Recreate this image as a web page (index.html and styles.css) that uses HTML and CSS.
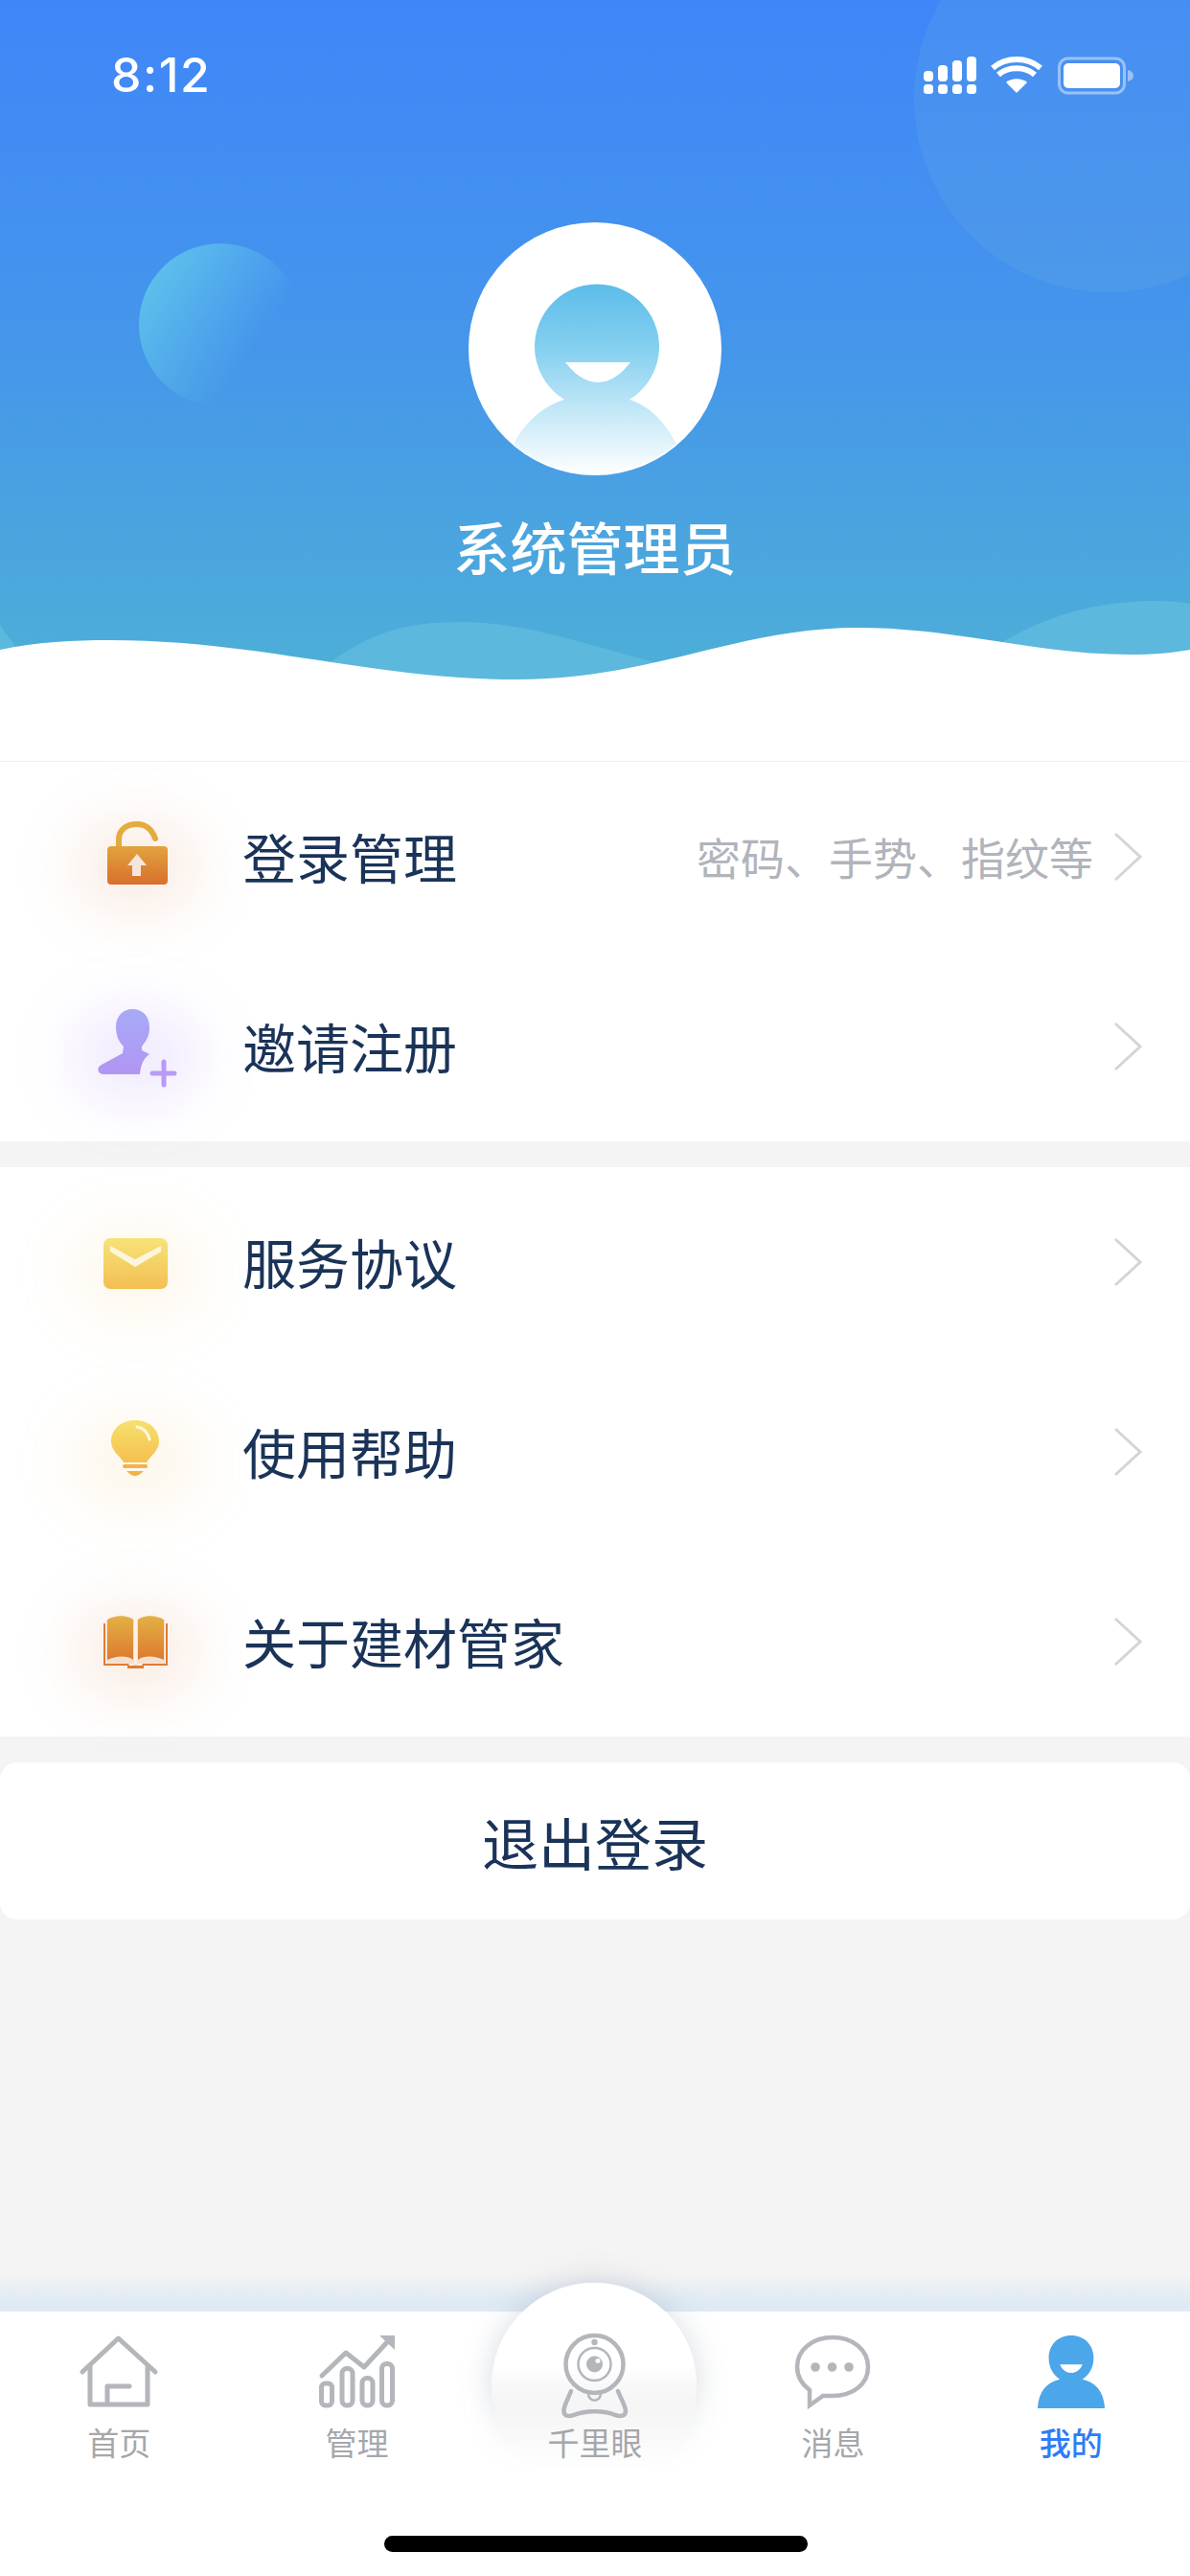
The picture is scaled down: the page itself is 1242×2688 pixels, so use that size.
FILE: index.html
```html
<!DOCTYPE html>
<html lang="zh">
<head>
<meta charset="utf-8">
<title>我的</title>
<link rel="stylesheet" href="styles.css">
</head>
<body>
<div class="page">
  <header class="hero">
    <svg class="hero-art" viewBox="0 0 1242 794" aria-hidden="true">
      <defs>
        <linearGradient id="sky" x1="0" y1="0" x2="0" y2="1"><stop offset="0" stop-color="#3f86f9"/><stop offset=".5" stop-color="#4596eb"/><stop offset="1" stop-color="#4eb0d6"/></linearGradient>
        <linearGradient id="ball" x1=".05" y1=".15" x2=".72" y2=".62"><stop offset="0" stop-color="#62c8eb" stop-opacity=".9"/><stop offset="1" stop-color="#62c8eb" stop-opacity="0"/></linearGradient>
      </defs>
      <rect width="1242" height="720" fill="url(#sky)"/>
      <circle cx="1156" cy="103" r="202" fill="#78bcd8" fill-opacity=".16"/>
      <circle cx="230" cy="339" r="85" fill="url(#ball)"/>
      <path d="M0 652C8 665 16 672 26 690L0 700Z" fill="#5cb8dd"/>
      <path d="M320 710C380 660 420 649 483 649C560 650 630 680 720 700L600 740Z" fill="#5cb8dd"/>
      <path d="M1030 680C1090 640 1150 627 1204 627C1220 627 1232 628 1242 630V700H1050Z" fill="#5cb8dd"/>
      <path d="M0 678C38 670 76 668 115 668C270 668 390 709 539 709C680 709 770 655 895 655C1000 655 1080 683 1180 683C1205 683 1225 681 1242 678V794H0Z" fill="#fff"/>
    </svg>
    <div class="avatar">
      <svg class="avatar-art" viewBox="0 0 264 264" aria-hidden="true">
        <defs><linearGradient id="face" x1="0" y1="63" x2="0" y2="264" gradientUnits="userSpaceOnUse"><stop offset="0" stop-color="#5cbce9"/><stop offset=".35" stop-color="#86d0f0"/><stop offset=".68" stop-color="#c6e9f7"/><stop offset="1" stop-color="#fff"/></linearGradient></defs>
        <path d="M100 185A65 65 0 1 1 168 185C190 192 206 210 217 231A132 132 0 0 1 47 231C58 210 77 192 100 185Z" fill="url(#face)"/>
        <path d="M101 146H169C160 158 148 167 135 167C122 167 110 158 101 146Z" fill="#fff"/>
      </svg>
    </div>
    <h1 class="name">系统管理员</h1>
  </header>

  <section class="group">
    <a class="row">
      <span class="ico"><span class="glow glow-orange"></span>
        <svg class="i-lock" viewBox="0 0 63 66" aria-hidden="true"><defs><linearGradient id="lock" x1="0" y1="0" x2="0" y2="1"><stop offset="0" stop-color="#e2a33e"/><stop offset="1" stop-color="#d86f2c"/></linearGradient></defs>
          <path d="M12 28V19C12 8 21 3 31 3C41 3 47 10 50 18" fill="none" stroke="#e4ac3f" stroke-width="6" stroke-linecap="round"/>
          <rect x="0" y="26" width="63" height="40" rx="4" fill="url(#lock)"/>
          <path d="M31 34L41 46H35V57H26V46H21Z" fill="#f6e6da"/></svg></span>
      <span class="label">登录管理</span><span class="hint">密码、手势、指纹等</span>
      <svg class="chev" viewBox="0 0 30 52" aria-hidden="true"><path d="M2 2L28 26L2 50"/></svg>
    </a>
    <a class="row">
      <span class="ico"><span class="glow glow-purple"></span>
        <svg class="i-user" viewBox="0 0 82 81" aria-hidden="true"><defs><linearGradient id="usr" x1="0" y1="0" x2="0" y2="1"><stop offset="0" stop-color="#a7aaf7"/><stop offset="1" stop-color="#b195f3"/></linearGradient></defs>
          <path d="M36 0C48 0 54 8 54 20C54 28 50 34 46 39L46 43L54 47C48 51 45 58 44 68H6C0 68 -2 61 4 58L26 46L27 39C22 34 19 28 19 18C19 8 26 0 36 0Z" fill="url(#usr)"/>
          <path d="M57 67H80M69 55V79" stroke="#b79bf5" stroke-width="5" stroke-linecap="round" fill="none"/></svg></span>
      <span class="label">邀请注册</span>
      <svg class="chev" viewBox="0 0 30 52" aria-hidden="true"><path d="M2 2L28 26L2 50"/></svg>
    </a>
  </section>

  <section class="group">
    <a class="row">
      <span class="ico"><span class="glow glow-yellow"></span>
        <svg class="i-mail" viewBox="0 0 67 53" aria-hidden="true"><defs><linearGradient id="mail" x1="0" y1="0" x2="0" y2="1"><stop offset="0" stop-color="#f7e377"/><stop offset="1" stop-color="#f3bf53"/></linearGradient></defs>
          <rect width="67" height="53" rx="7" fill="url(#mail)"/>
          <path d="M7 8L33 22L60 8V14L33 30L7 14Z" fill="#fdf6dc"/></svg></span>
      <span class="label">服务协议</span>
      <svg class="chev" viewBox="0 0 30 52" aria-hidden="true"><path d="M2 2L28 26L2 50"/></svg>
    </a>
    <a class="row">
      <span class="ico"><span class="glow glow-bulb"></span>
        <svg class="i-bulb" viewBox="0 0 50 58" aria-hidden="true"><defs><linearGradient id="bulb" x1="0" y1="0" x2="0" y2="1"><stop offset="0" stop-color="#f7e06e"/><stop offset="1" stop-color="#f5c04f"/></linearGradient></defs>
          <path d="M25 0C40 0 50 10 50 22C50 32 41 37 37 44H13C9 37 0 32 0 22C0 10 10 0 25 0Z" fill="url(#bulb)"/>
          <path d="M27 7C33 8 38 11 40 20" fill="none" stroke="#fdf8e2" stroke-width="3" stroke-linecap="round"/>
          <rect x="12" y="46" width="26" height="4" rx="2" fill="#f4b24a"/><path d="M16 53H34C31 56 28 58 25 58C22 58 19 56 16 53Z" fill="#f4b24a"/></svg></span>
      <span class="label">使用帮助</span>
      <svg class="chev" viewBox="0 0 30 52" aria-hidden="true"><path d="M2 2L28 26L2 50"/></svg>
    </a>
    <a class="row">
      <span class="ico"><span class="glow glow-orange"></span>
        <svg class="i-book" viewBox="0 0 67 56" aria-hidden="true"><defs><linearGradient id="book" x1="0" y1="0" x2="0" y2="1"><stop offset="0" stop-color="#e4b045"/><stop offset="1" stop-color="#dc7a2f"/></linearGradient></defs>
          <path d="M0 9H2V51H26L27 53H40L41 51H65V9H67V53H42V56H25V53H0Z" fill="#de7d33"/>
          <path d="M3 51V6C13 0 24 0 32 5V52L30 53H37L35 52V5C43 0 54 0 64 6V51Z" fill="#f5e0cf"/>
          <path d="M4 5C13 0 24 0 31 5V47C24 42 13 43 4 47ZM36 5C43 0 54 0 63 5V47C54 43 43 42 36 47Z" fill="url(#book)"/></svg></span>
      <span class="label">关于建材管家</span>
      <svg class="chev" viewBox="0 0 30 52" aria-hidden="true"><path d="M2 2L28 26L2 50"/></svg>
    </a>
  </section>

  <button class="logout">退出登录</button>
</div>

<div class="status">
  <span class="time">8:12</span>
  <svg class="status-icons" viewBox="0 0 220 40" aria-hidden="true">
    <g fill="#fff">
      <rect x="0" y="15" width="10" height="11" rx="4"/><rect x="15" y="9" width="10" height="17" rx="4"/><rect x="30" y="4" width="10" height="22" rx="4"/><rect x="45" y="0" width="10" height="26" rx="4"/>
      <rect x="0" y="29" width="10" height="10" rx="3.5"/><rect x="15" y="29" width="10" height="10" rx="3.5"/><rect x="30" y="29" width="10" height="10" rx="3.5"/><rect x="45" y="29" width="10" height="10" rx="3.5"/>
      <path d="M97 38L86 27C92 22 102 22 108 27Z"/>
      <path d="M78 19C88 10 106 10 116 19" fill="none" stroke="#fff" stroke-width="6"/>
      <path d="M72 10C86 -2 108 -2 122 10" fill="none" stroke="#fff" stroke-width="6" transform="translate(0 2)"/>
      <rect x="146" y="7" width="59" height="26" rx="5"/>
      <rect x="141.500" y="2" width="68" height="36" rx="9" fill="none" stroke="#fff" stroke-opacity=".45" stroke-width="3"/>
      <path d="M213 14C217 15 219 17 219 20C219 23 217 25 213 26Z" fill-opacity=".45"/>
    </g>
  </svg>
</div>

<nav class="tabbar">
  <div class="bump-mask"><div class="bump"></div></div>
  <div class="tabs">
    <a class="tab"><svg viewBox="0 0 80 76" aria-hidden="true"><path d="M2 38L39.500 3L78 38M10 31V72H70V31M28 72V53H51" fill="none" stroke="#b3b6bb" stroke-width="5" stroke-linecap="round" stroke-linejoin="round"/></svg><span>首页</span></a>
    <a class="tab"><svg viewBox="0 0 80 76" aria-hidden="true"><g fill="none" stroke="#b3b6bb" stroke-width="5" stroke-linecap="round" stroke-linejoin="round"><path d="M3 42L28 18L47 33L72 6"/><rect x="2.500" y="50" width="11" height="23" rx="4"/><rect x="24" y="34.500" width="11" height="38.500" rx="5"/><rect x="45" y="44.500" width="11" height="28.500" rx="5"/><rect x="65.500" y="29.500" width="11" height="43.500" rx="5"/></g><path d="M63 0H79V15Z" fill="#b3b6bb"/></svg><span>管理</span></a>
    <a class="tab"><svg class="i-cam" viewBox="0 0 68 88" aria-hidden="true"><g fill="none" stroke="#b3b6bb"><circle cx="33.500" cy="32" r="30" stroke-width="4.500"/><circle cx="33.500" cy="32" r="17" stroke-width="2.500"/><path d="M9 60C6 68 1 76 1.500 81C1.500 86 6 87 12 85C24 80 44 80 55 85C61 87 66 86 66 81C66 76 61 68 58 60" stroke-linecap="round" stroke-width="4.500"/><path d="M27 63C28 72 39 72 40 63" stroke-width="2.500"/></g><circle cx="33.500" cy="32" r="8.500" fill="#b3b6bb"/><circle cx="33.500" cy="9" r="3.200" fill="#b3b6bb"/><circle cx="37" cy="28.500" r="2.500" fill="#fff"/></svg><span>千里眼</span></a>
    <a class="tab"><svg viewBox="0 0 80 76" aria-hidden="true"><path d="M16 73V57C7 50 3 42 3 33C3 15 19 2 40 2C61 2 77 15 77 33C77 51 61 63 40 63H30Z" fill="none" stroke="#b3b6bb" stroke-width="4.500" stroke-linejoin="miter"/><circle cx="22" cy="33" r="4.800" fill="#b3b6bb"/><circle cx="39.500" cy="33" r="4.800" fill="#b3b6bb"/><circle cx="57" cy="33" r="4.800" fill="#b3b6bb"/></svg><span>消息</span></a>
    <a class="tab tab-on"><svg viewBox="0 0 72 78" aria-hidden="true"><path d="M24 47C15 41 12 32 12 24C12 10 22 0 36 0C50 0 60 10 60 24C60 32 57 41 48 47C62 50 71 60 72 78H0C1 60 10 50 24 47Z" fill="#4ba6ea"/><path d="M24 31H48C46 37 41 40 36 40C31 40 26 37 24 31Z" fill="#fff"/></svg><span>我的</span></a>
  </div>
  <div class="home"></div>
</nav>
</body>
</html>
```
FILE: styles.css
```css
* { box-sizing: border-box; margin: 0; padding: 0; }
html, body { width: 1242px; height: 2688px; overflow: hidden; }
body { position: relative; background: #f4f4f4; font-family: "Noto Sans CJK SC", "Noto Sans", sans-serif; }
.page { display: flex; flex-direction: column; }

.hero { position: relative; height: 795px; background: #fff; border-bottom: 1px solid #f1f1f1; }
.hero-art { position: absolute; left: 0; top: 0; width: 1242px; height: 794px; display: block; }
.avatar { position: absolute; left: 489px; top: 232px; width: 264px; height: 264px; border-radius: 50%; background: #fff; overflow: hidden; }
.avatar-art { display: block; width: 264px; height: 264px; }
.name { position: absolute; left: 0; right: 0; top: 528px; text-align: center; color: #fff; font-size: 59px; font-weight: 500; line-height: 84px; }

.group { background: #fff; display: flex; flex-direction: column; margin-bottom: 27px; }
.row { height: 198px; display: flex; align-items: center; padding: 0 50px 0 253px; position: relative; }
.ico { position: absolute; left: 60px; top: 0; bottom: 0; width: 166px; display: flex; align-items: center; justify-content: center; }
.ico svg { position: relative; overflow: visible; display: block; }
.glow { position: absolute; left: 14px; right: 14px; top: 50%; height: 100px; margin-top: -40px; border-radius: 50%; filter: blur(30px); }
.glow-orange { background: rgba(222, 130, 70, .14); }
.glow-purple { background: rgba(170, 130, 250, .17); }
.glow-yellow { background: rgba(245, 200, 90, .12); }
.glow-bulb { background: rgba(245, 190, 90, .13); }
.i-lock { width: 63px; height: 66px; margin-top: -9px; }
.i-user { width: 82px; height: 81px; margin-top: 3px; }
.i-mail { width: 67px; height: 53px; margin: 3px 3px 0 0; }
.i-bulb { width: 50px; height: 58px; margin: -8px 4px 0 0; }
.i-book { width: 67px; height: 56px; margin: 0 3px 0 0; }
.label { flex: 1; font-size: 56px; color: #1a3358; line-height: 80px; margin-top: -3px; }
.hint { font-size: 46px; color: #b1b4bb; margin-right: 21px; margin-top: -3px; }
.chev { width: 30px; height: 52px; display: block; fill: none; stroke: #d3d5d8; stroke-width: 3; }

.logout { display: block; width: 1242px; height: 164px; border: 0; border-radius: 18px; background: #fff; color: #1a3358; font: 400 59px "Noto Sans CJK SC", "Noto Sans", sans-serif; }

.status { position: absolute; left: 0; right: 0; top: 0; }
.time { position: absolute; left: 116px; top: 48px; color: #fff; font: 500 50px/60px Inter, "Noto Sans", sans-serif; letter-spacing: 1.5px; }
.status-icons { position: absolute; left: 964px; top: 59px; width: 220px; height: 40px; overflow: visible; }

.tabbar { position: absolute; left: 0; right: 0; top: 2412px; height: 276px; background: #fff; border-top: 2px solid #fdfeff; }
.tabbar::before { content: ""; position: absolute; left: 0; right: 0; top: -42px; height: 40px; background: linear-gradient(to bottom, rgba(222, 234, 244, 0), #dfeaf4 75%); }
.bump-mask { position: absolute; left: 433px; top: -82px; width: 374px; height: 252px; padding: 50px 80px 0; -webkit-mask-image: linear-gradient(to bottom, #000 156px, transparent 246px); mask-image: linear-gradient(to bottom, #000 156px, transparent 246px); }
.bump { width: 214px; height: 214px; border-radius: 50%; background: linear-gradient(to bottom, #fff 40%, #f1f1f2 62%); box-shadow: 0 0 32px rgba(120, 135, 155, .3); }
.tabs { position: relative; display: grid; grid-template-columns: repeat(5, 1fr); }
.tab { display: flex; flex-direction: column; align-items: center; height: 170px; padding-top: 23px; font-size: 33px; line-height: 48px; color: #a5a7ab; }
.tab svg { display: block; width: 80px; height: 76px; overflow: visible; margin-bottom: 11px; }
.tab svg.i-cam { width: 68px; height: 88px; margin-top: -2px; margin-bottom: 1px; }
.tab-on { color: #2f7cf6; font-weight: 500; }
.home { position: absolute; left: 401px; top: 232px; width: 442px; height: 17px; border-radius: 9px; background: #000; }
```
